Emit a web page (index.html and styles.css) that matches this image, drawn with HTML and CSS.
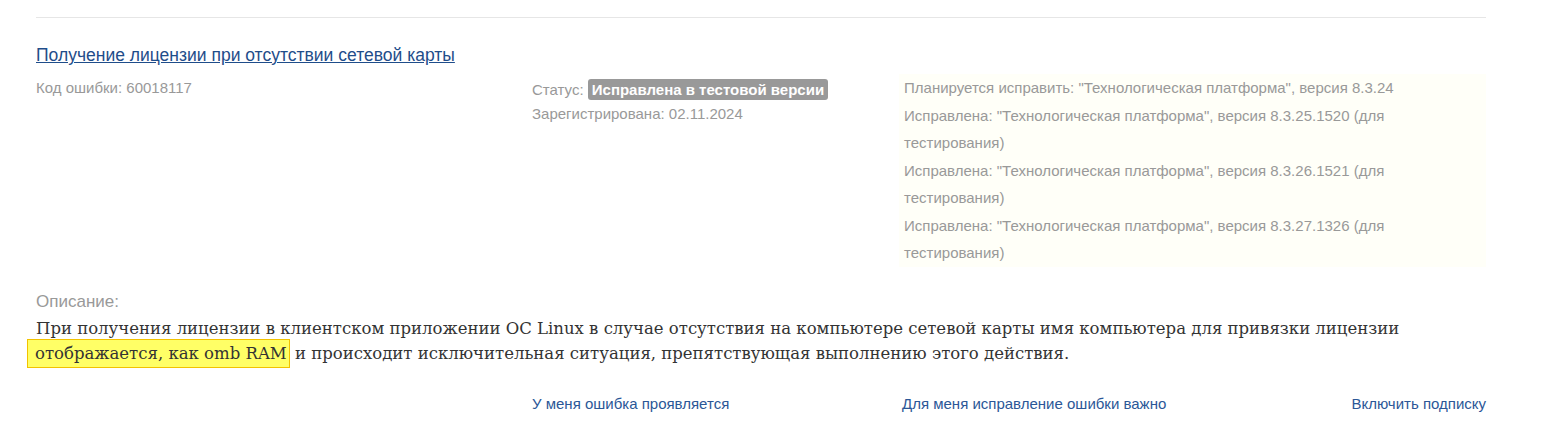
FILE: index.html
```html
<!DOCTYPE html>
<html lang="ru">
<head>
<meta charset="utf-8">
<title>Ошибка 60018117</title>
<link rel="stylesheet" href="styles.css">
</head>
<body>
<div class="page">
  <div class="item">
    <a class="title" href="#">Получение лицензии при отсутствии сетевой карты</a>
    <div class="meta">
      <div class="col-code">Код ошибки: 60018117</div>
      <div class="col-status">
        <div>Статус: <span class="badge">Исправлена в тестовой версии</span></div>
        <div>Зарегистрирована: 02.11.2024</div>
      </div>
      <div class="col-fix">
        <div>Планируется исправить: "Технологическая платформа", версия 8.3.24</div>
        <div>Исправлена: "Технологическая платформа", версия 8.3.25.1520 (для тестирования)</div>
        <div>Исправлена: "Технологическая платформа", версия 8.3.26.1521 (для тестирования)</div>
        <div>Исправлена: "Технологическая платформа", версия 8.3.27.1326 (для тестирования)</div>
      </div>
    </div>
    <div class="desc-label">Описание:</div>
    <div class="desc">При получения лицензии в клиентском приложении ОС Linux в случае отсутствия на компьютере сетевой карты имя компьютера для привязки лицензии <span class="hl">отображается, как omb RAM</span> и происходит исключительная ситуация, препятствующая выполнению этого действия.</div>
    <div class="actions">
      <a class="act act-first" href="#">У меня ошибка проявляется</a>
      <div class="act-group">
        <a class="act act-mid" href="#">Для меня исправление ошибки важно</a>
        <a class="act act-right" href="#">Включить подписку</a>
      </div>
    </div>
  </div>
</div>
</body>
</html>
```

FILE: styles.css
```css
html, body {
  margin: 0;
  padding: 0;
  background: #ffffff;
}
body {
  font-family: "Liberation Sans", Arial, sans-serif;
  font-size: 15px;
  color: #999999;
}
.page {
  padding-top: 17px;
  margin: 0 63px 0 36px;
}
.item {
  border-top: 1px solid #e6e6e6;
  padding-top: 27px;
}
.title {
  display: block;
  font-size: 17.5px;
  line-height: 21px;
  color: #1f4d8a;
  text-decoration: underline;
  width: max-content;
}
.meta {
  display: grid;
  grid-template-columns: 496px 367px 1fr;
  margin-top: 8px;
}
.col-code {
  line-height: 28px;
}
.col-status {
  line-height: 24px;
  padding-top: 4px;
}
.badge {
  display: inline-block;
  background: #999999;
  color: #ffffff;
  font-weight: bold;
  border-radius: 3px;
  padding: 0 4px;
  line-height: 21px;
}
.col-fix {
  background: #fffff8;
  padding: 0 20px 0 5px;
  line-height: 27.5px;
}
.desc-label {
  font-size: 17px;
  line-height: 20px;
  margin-top: 25px;
}
.desc {
  margin-top: 4.5px;
  font-family: "DejaVu Serif", "Liberation Serif", serif;
  font-size: 16.5px;
  line-height: 25px;
  color: #333333;
}
.hl {
  background: #ffff66;
  border: 1px solid #f2c200;
  padding: 4px 2px 4px 7px;
  margin-left: -9px;
}
.actions {
  display: grid;
  grid-template-columns: 496px 367px 1fr;
  margin-top: 27.5px;
  line-height: 20px;
}
.act {
  color: #2b5797;
  text-decoration: none;
  font-size: 15px;
}
.act-first {
  grid-column: 2;
}
.act-group {
  grid-column: 3;
  display: flex;
  justify-content: space-between;
  padding-left: 3px;
}
```
